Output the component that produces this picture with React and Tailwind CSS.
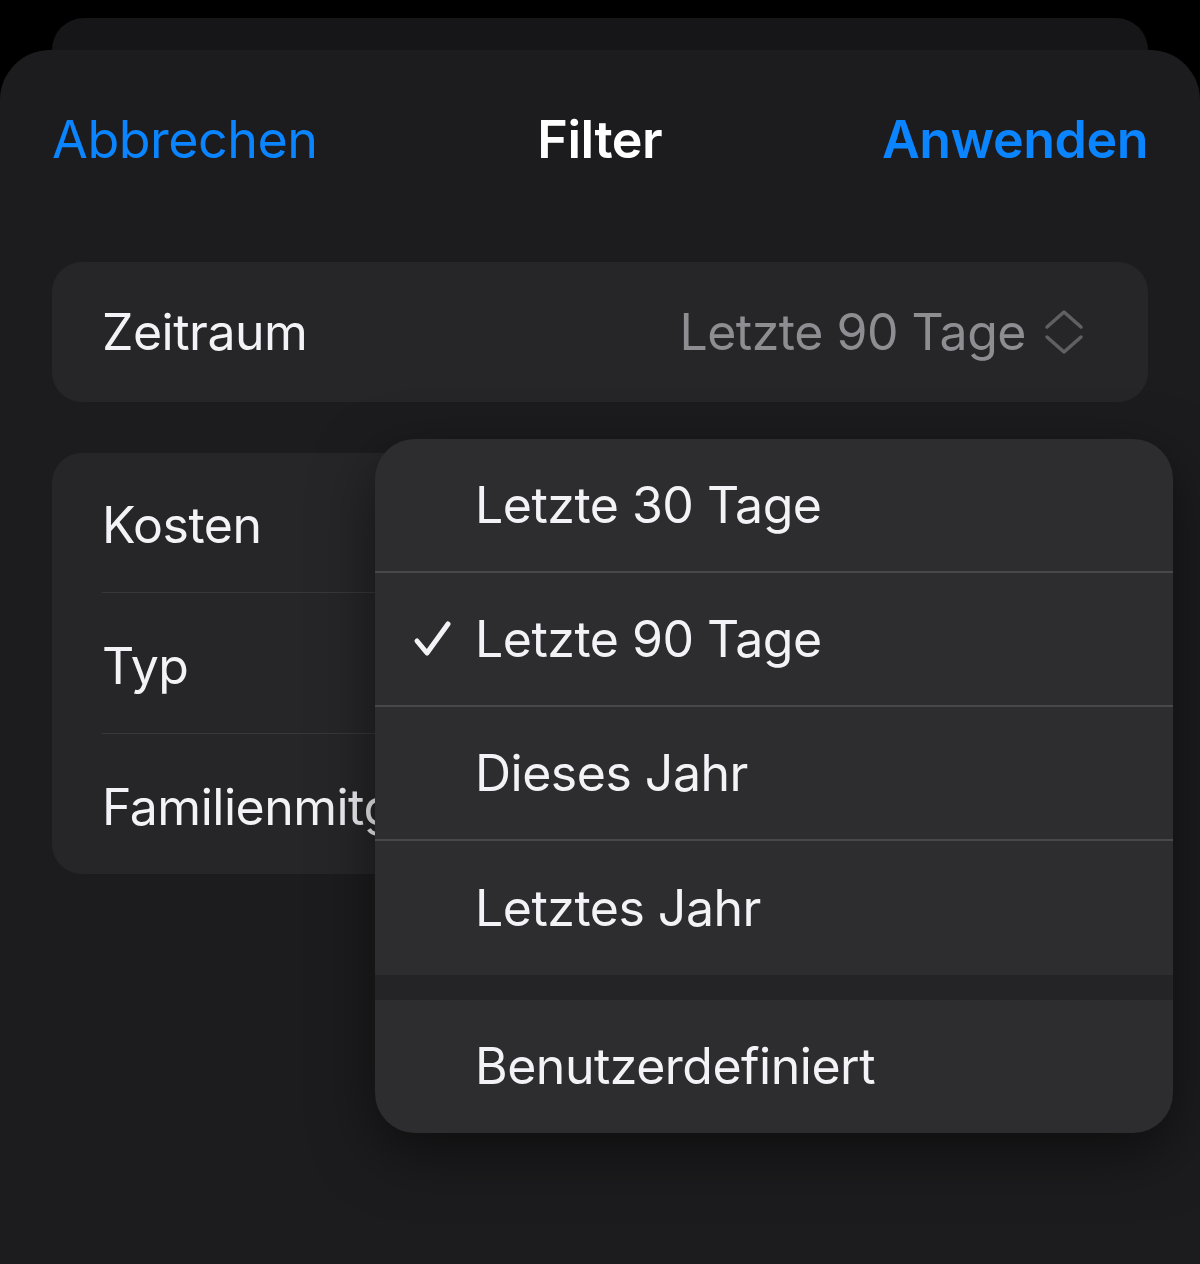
import React from "react";

const options = ["Letzte 30 Tage", "Letzte 90 Tage", "Dieses Jahr", "Letztes Jahr"];

function UpDown() {
  return (
    <svg width="40" height="46" viewBox="0 0 40 46" fill="none" stroke="#5f5f64" strokeWidth="3.5" strokeLinecap="round" strokeLinejoin="round">
      <polyline points="3,18 20,3 37,18" />
      <polyline points="3,28 20,43 37,28" />
    </svg>
  );
}

function Check() {
  return (
    <svg width="40" height="40" viewBox="0 0 40 40" fill="none" stroke="#f2f2f7" strokeWidth="5" strokeLinecap="round" strokeLinejoin="round">
      <polyline points="4,22 14,34 35,5" />
    </svg>
  );
}

export default function App() {
  const selected = "Letzte 90 Tage";

  return (
    <div className="min-h-screen bg-black pt-[18px] font-['Inter',sans-serif] text-[#f2f2f7] overflow-hidden">
      {/* card behind the sheet */}
      <div className="mx-[52px] h-[32px] rounded-t-[40px] bg-[#161618]" />

      <div className="relative h-[1214px] rounded-t-[50px] bg-[#1c1c1e] px-[52px]">
        {/* nav bar */}
        <div className="flex h-[180px] items-center justify-between text-[52px] tracking-[-0.5px]">
          <button className="text-[#0a84ff]">Abbrechen</button>
          <span className="font-semibold text-white">Filter</span>
          <button className="font-semibold text-[#0a84ff]">Anwenden</button>
        </div>

        {/* Zeitraum */}
        <div className="mt-[32px] flex h-[140px] items-center justify-between rounded-[30px] bg-[#262628] pl-[50px] pr-[64px] text-[50px] tracking-[-0.5px]">
          <span>Zeitraum</span>
          <div className="flex items-center gap-[18px]">
            <span className="text-[#8d8d92]">Letzte 90 Tage</span>
            <UpDown />
          </div>
        </div>

        {/* other filters */}
        <div className="mt-[51px] rounded-[30px] bg-[#262628] pl-[50px] text-[50px] tracking-[-0.5px]">
          <div className="flex h-[140px] items-center border-b border-[#38383a] pt-[6px]">Kosten</div>
          <div className="flex h-[141px] items-center border-b border-[#38383a] pt-[6px]">Typ</div>
          <div className="flex h-[140px] items-center pt-[6px]">Familienmitglied</div>
        </div>

        {/* popup menu */}
        <div className="absolute left-[375px] top-[389px] w-[798px] overflow-hidden rounded-[40px] bg-[#2d2d2f] text-[50px] tracking-[-0.5px] shadow-[0_20px_60px_rgba(0,0,0,0.5)]">
          {options.map((o, i) => (
            <div
              key={o}
              className={`flex h-[134px] items-center ${i < options.length - 1 ? "border-b-2 border-[#48484b]" : ""}`}
            >
              <div className="flex w-[100px] justify-end pr-[22px]">
                {o === selected && <Check />}
              </div>
              <span>{o}</span>
            </div>
          ))}
          <div className="h-[25px] bg-[#242426]" />
          <div className="flex h-[133px] items-center pl-[100px]">Benutzerdefiniert</div>
        </div>
      </div>
    </div>
  );
}
